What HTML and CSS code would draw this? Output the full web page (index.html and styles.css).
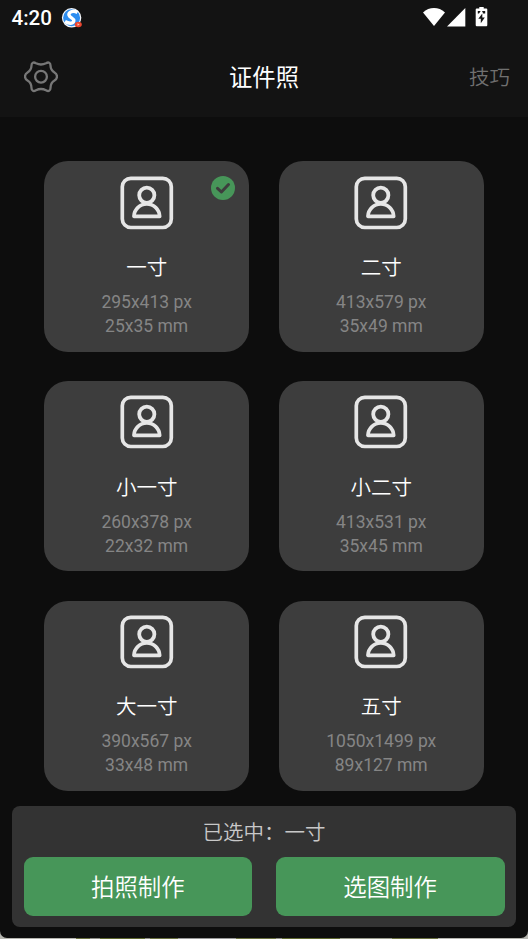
FILE: index.html
```html
<!DOCTYPE html>
<html lang="zh-CN">
<head>
<meta charset="utf-8">
<title>证件照</title>
<link rel="stylesheet" href="styles.css">
</head>
<body>
<svg class="defs" width="0" height="0">
  <symbol id="portrait" viewBox="0 0 54 54">
    <rect x="2.3" y="2.3" width="49" height="49.200" rx="8.500" stroke-width="3.700"/>
    <circle cx="26.800" cy="19.200" r="7.600" stroke-width="3.800"/>
    <path d="M13.900 40.400H39.700C39.500 33.500 33.800 28 26.800 28S14.100 33.500 13.900 40.400Z" stroke-width="3.600" stroke-linejoin="round"/>
  </symbol>
</svg>
<div class="phone">
  <div class="top">
    <div class="status">
      <span class="time">4:20</span>
      <svg class="app" width="22" height="22" viewBox="0 0 22 22">
        <circle cx="10.600" cy="9.800" r="9.700" fill="#f5f7fa"/>
        <circle cx="10.600" cy="9.800" r="8.500" fill="#2d8df0"/>
        <path d="M16.500 4.500C12 1.800 7.300 4.300 8 7.200C8.700 10 13 10 12.800 12.800C12.500 15.800 8 16 4 13.500" fill="none" stroke="#fff" stroke-width="3.400"/>
        <ellipse cx="17.300" cy="16.500" rx="3.500" ry="2.700" fill="#ed4630"/>
        <path d="M16.500 15.300L18.700 16.500L16.500 17.700Z" fill="#ffc0ad"/>
      </svg>
      <svg class="signals" width="66" height="22" viewBox="0 0 66 22">
        <path d="M0 5.500C6.300-.4 15.700-.4 22 5.500L11 19Z" fill="#fff"/>
        <path d="M42.300 1V19.400H24Z" fill="#fff"/>
        <path d="M53.800 1.500H56.300V.1H60.700V1.500H63.300Q64.300 1.500 64.300 2.500V18Q64.300 19.200 63.300 19.200H53.800Q52.700 19.200 52.700 18V2.500Q52.700 1.500 53.800 1.500Z" fill="#fff"/>
        <path d="M54.800 4H57.700L56 6.500H54.800ZM59 4H62.200V6.500H60.200ZM59.300 6.500L55.300 11.800H57.800V16.300L61.800 10.500H59.300Z" fill="#161616"/>
      </svg>
    </div>
    <header class="nav">
      <svg class="gear" width="34" height="32" viewBox="0 0 34 32">
        <path d="M7.500 4.500C7.500 1.500 9.500.8 12 2.200C15.500 4 18.500 4 22 2.200C24.500.8 26.500 1.500 26.500 4.500C26.600 8 27.700 9.800 30.500 11.400C33.800 13.300 33.800 17.700 30.500 19.600C27.700 21.200 26.600 23 26.500 27C26.500 30 24.500 30.700 22 29.300C18.500 27.500 15.500 27.500 12 29.300C9.500 30.700 7.500 30 7.500 27C7.400 23 6.300 21.200 3.500 19.600C.2 17.700.2 13.300 3.500 11.400C6.300 9.800 7.400 8 7.500 4.500Z"/>
        <circle cx="17" cy="15.700" r="5.900"/>
      </svg>
      <h1>证件照</h1>
      <a class="tips">技巧</a>
    </header>
  </div>
  <main class="grid">
    <section class="card">
      <svg class="portrait"><use href="#portrait"/></svg>
      <svg class="check" viewBox="0 0 24 24"><circle cx="12" cy="12" r="12"/><path d="M6.500 12.300L10.400 16L17.500 8.500"/></svg>
      <h2>一寸</h2><p>295x413 px<br>25x35 mm</p>
    </section>
    <section class="card"><svg class="portrait"><use href="#portrait"/></svg><h2>二寸</h2><p>413x579 px<br>35x49 mm</p></section>
    <section class="card"><svg class="portrait"><use href="#portrait"/></svg><h2>小一寸</h2><p>260x378 px<br>22x32 mm</p></section>
    <section class="card"><svg class="portrait"><use href="#portrait"/></svg><h2>小二寸</h2><p>413x531 px<br>35x45 mm</p></section>
    <section class="card"><svg class="portrait"><use href="#portrait"/></svg><h2>大一寸</h2><p>390x567 px<br>33x48 mm</p></section>
    <section class="card"><svg class="portrait"><use href="#portrait"/></svg><h2>五寸</h2><p>1050x1499 px<br>89x127 mm</p></section>
  </main>
  <footer class="panel">
    <div class="selected">已选中：一寸</div>
    <div class="actions"><button>拍照制作</button><button>选图制作</button></div>
  </footer>
</div>
</body>
</html>
```
FILE: styles.css
```css
* { box-sizing: border-box; margin: 0; padding: 0; }
body {
  height: 939px;
  overflow: hidden;
  font-family: Roboto, "Noto Sans CJK SC", sans-serif;
  background: linear-gradient(90deg, #b5b5af 0 76px, #6a7040 76px 90px, #8e8e86 90px 100px, #5f6830 100px 145px, #8e8e86 145px 150px, #6a7040 150px 178px, #999 178px 236px, #6a7040 236px 276px, #8e8e86 276px 282px, #5f6830 282px 340px, #999b8c 340px 392px, #6a7040 392px 438px, #b5b5af 438px);
}
.defs { position: absolute; }
.phone {
  height: 938px;
  background: #0d0d0d;
  border-radius: 0 0 7px 7px;
  overflow: hidden;
}
.top { height: 117px; background: #131313; }
.status {
  height: 36px;
  padding: 0 39px 0 11.500px;
  display: flex;
  align-items: center;
}
.time { color: #fff; font-size: 20.500px; font-weight: 500; line-height: 36px; width: 49px; }
.app { margin-top: 2px; }
.signals { margin-left: auto; }
.nav {
  height: 81px;
  padding: 0 18px 0 24px;
  display: grid;
  grid-template-columns: 60px 1fr 66px;
  align-items: center;
}
.gear { fill: none; stroke: #777; stroke-width: 2.3; }
.nav h1 { padding-bottom: 2px; color: #fff; font-size: 23.300px; font-weight: 400; text-align: center; }
.tips { padding-bottom: 2px; color: #707070; font-size: 20.500px; font-weight: 350; text-align: right; }
.grid {
  margin: 44.400px 44px 0;
  display: grid;
  grid-template-columns: 205.300px 205.300px;
  grid-auto-rows: 190.300px;
  gap: 29.300px;
}
.card {
  position: relative;
  display: flex;
  flex-direction: column;
  align-items: center;
  padding-top: 14.200px;
  background: #3d3d3d;
  border-radius: 24px;
}
.portrait { width: 54px; height: 54px; fill: none; stroke: #e6e6e6; flex: none; }
.check { position: absolute; left: 167px; top: 14.500px; width: 24px; height: 24px; }
.check circle { fill: #479659; }
.check path { fill: none; stroke: #3d3d3d; stroke-width: 3; stroke-linecap: round; stroke-linejoin: round; }
.card h2 { margin-top: 23.500px; color: #fff; font-size: 20.500px; font-weight: 350; line-height: 30px; }
.card p { margin-top: 7.200px; color: #858585; font-size: 17.500px; line-height: 24px; text-align: center; }
.panel {
  width: 504px;
  height: 121.500px;
  margin: 15px 12px 0;
  padding: 12px 11.500px;
  background: #333;
  border-radius: 8px;
}
.selected { height: 39.500px; color: #c8c8c8; font-size: 20.500px; font-weight: 350; line-height: 30px; text-align: center; }
.actions { display: grid; grid-template-columns: 1fr 1fr; gap: 23.500px; }
button {
  height: 58.500px;
  padding-bottom: 2px;
  border: 0;
  border-radius: 9px;
  background: #479659;
  color: #fff;
  font: inherit;
  font-size: 23.400px;
  font-weight: 350;
}
```
